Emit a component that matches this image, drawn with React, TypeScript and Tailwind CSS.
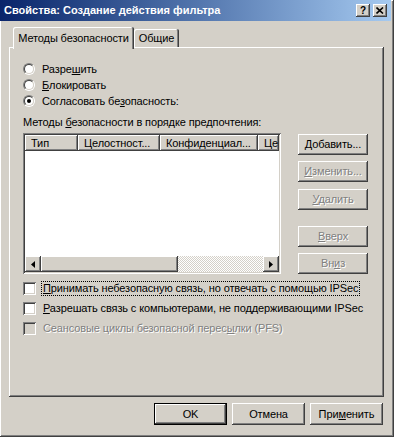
import React from "react";

const raised =
  "bg-[#d4d0c8] shadow-[inset_-1px_-1px_#404040,inset_1px_1px_#ffffff,inset_-2px_-2px_#808080,inset_2px_2px_#d4d0c8]";
const sunken =
  "shadow-[inset_1px_1px_#808080,inset_-1px_-1px_#ffffff,inset_2px_2px_#404040,inset_-2px_-2px_#d4d0c8]";
const disabledText = "text-[#808080] [text-shadow:1px_1px_0_#ffffff]";

function U({ children }: { children: React.ReactNode }) {
  return <span className="underline underline-offset-[1px] decoration-1">{children}</span>;
}

function Radio({ checked, children }: { checked?: boolean; children: React.ReactNode }) {
  return (
    <div className="flex items-center h-[16px]">
      <div className="w-[12px] h-[12px] rounded-full border border-t-[#808080] border-l-[#808080] border-b-white border-r-white">
        <div className="w-full h-full rounded-full border border-t-[#404040] border-l-[#404040] border-b-[#d4d0c8] border-r-[#d4d0c8] bg-white flex items-center justify-center">
          {checked && <div className="w-[4px] h-[4px] rounded-full bg-black" />}
        </div>
      </div>
      <span className="ml-[7px]">{children}</span>
    </div>
  );
}

function Check({ disabled, focus, children }: { disabled?: boolean; focus?: boolean; children: React.ReactNode }) {
  return (
    <div className="flex items-center h-[20px] whitespace-nowrap">
      <div className={`w-[13px] h-[13px] shrink-0 ${sunken} ${disabled ? "bg-[#d4d0c8]" : "bg-white"}`} />
      <span
        className={`ml-[5px] px-[1px] py-[1px] border ${focus ? "border-dotted border-black" : "border-transparent"} ${
          disabled ? disabledText : ""
        }`}
      >
        {children}
      </span>
    </div>
  );
}

function Btn({
  children,
  disabled,
  className = "",
}: {
  children: React.ReactNode;
  disabled?: boolean;
  className?: string;
}) {
  return (
    <div
      className={`${raised} h-[21px] flex items-center justify-center whitespace-nowrap ${disabled ? disabledText : ""} ${className}`}
    >
      {children}
    </div>
  );
}

function Arrow({ dir }: { dir: "left" | "right" }) {
  return (
    <div className={`${raised} w-[16px] h-[16px] flex items-center justify-center shrink-0`}>
      <svg width="4" height="7" viewBox="0 0 4 7">
        {dir === "left" ? <path d="M4 0 L0 3.5 L4 7 Z" fill="#000" /> : <path d="M0 0 L4 3.5 L0 7 Z" fill="#000" />}
      </svg>
    </div>
  );
}

function Col({ w, children }: { w: string; children?: React.ReactNode }) {
  return (
    <div className={`${raised} ${w} shrink-0 pl-[6px] flex items-center overflow-hidden whitespace-nowrap`}>{children}</div>
  );
}

export default function App() {
  return (
    <div
      className="w-[394px] h-[437px] bg-[#d4d0c8] text-[11px] text-black leading-none overflow-hidden flex flex-col shadow-[inset_-1px_-1px_#404040,inset_1px_1px_#ffffff,inset_-2px_-2px_#808080]"
      style={{ fontFamily: '"Liberation Sans", Arial, sans-serif' }}
    >
      {/* title bar */}
      <div className="mr-[3px] h-[21px] bg-gradient-to-r from-[#0a246a] to-[#a6caf0] flex items-center pl-[4px] pr-[4px]">
        <span className="text-white font-bold text-[11px] flex-1">Свойства: Создание действия фильтра</span>
        <div className={`${raised} w-[14px] h-[13px] flex items-center justify-center font-bold text-[10px]`}>?</div>
        <div className={`${raised} w-[14px] h-[13px] flex items-center justify-center ml-[3px]`}>
          <svg width="8" height="7" viewBox="0 0 8 7">
            <path d="M0.5 0.5 L7 6.5 M7 0.5 L0.5 6.5" stroke="#000" strokeWidth="1.6" />
          </svg>
        </div>
      </div>

      <div className="flex flex-col pl-[9px] pr-[10px] pt-[6px] tracking-[-0.12px]">
        {/* tabs */}
        <div className="flex items-end h-[20px] pl-[4px]">
          <div className="relative z-10 -mb-[2px] h-[22px] w-[121px] bg-[#d4d0c8] rounded-t-[2px] shadow-[inset_-1px_0_#404040,inset_1px_1px_#ffffff,inset_-2px_0_#808080] flex items-start justify-center pt-[6px]">
            Методы безопасности
          </div>
          <div className="h-[18px] w-[45px] bg-[#d4d0c8] rounded-t-[2px] shadow-[inset_-1px_0_#404040,inset_1px_1px_#ffffff,inset_-2px_0_#808080] flex items-start justify-center pt-[4px]">
            Общие
          </div>
        </div>

        {/* panel */}
        <div className={`${raised} h-[350px] flex flex-col pl-[14px] pr-[16px] pt-[14px]`}>
          <Radio>
            Разре<U>ш</U>ить
          </Radio>
          <Radio>
            <U>Б</U>локировать
          </Radio>
          <Radio checked>
            Согласовать бе<U>з</U>опасность:
          </Radio>

          <div className="mt-[8px] h-[13px]">
            Методы <U>б</U>езопасности в порядке предпочтения:
          </div>

          <div className="flex mt-[3px]">
            {/* list */}
            <div className={`${sunken} bg-white w-[258px] h-[141px] p-[2px] flex flex-col`}>
              <div className="flex h-[16px] overflow-hidden">
                <Col w="w-[53px]">Тип</Col>
                <Col w="w-[82px]">Целостност...</Col>
                <Col w="w-[98px]">Конфиденциал...</Col>
                <Col w="w-[21px]">Це</Col>
              </div>
              <div className="flex-1" />
              <div className="flex h-[16px]">
                <Arrow dir="left" />
                <div className={`${raised} w-[137px] shrink-0`} />
                <div className="flex-1 bg-[image:repeating-conic-gradient(#ffffff_0_25%,#d4d0c8_0_50%)] bg-[length:2px_2px]" />
                <Arrow dir="right" />
              </div>
            </div>

            {/* side buttons */}
            <div className="ml-[17px] w-[70px] flex flex-col pt-[1px]">
              <Btn>
                <span>
                  <U>Д</U>обавить...
                </span>
              </Btn>
              <Btn disabled className="mt-[6px]">
                <span>
                  <U>И</U>зменить...
                </span>
              </Btn>
              <Btn disabled className="mt-[7px]">
                <span>
                  <U>У</U>далить
                </span>
              </Btn>
              <Btn disabled className="mt-[16px]">
                <span>
                  <U>В</U>верх
                </span>
              </Btn>
              <Btn disabled className="mt-[6px]">
                <span>
                  Вн<U>и</U>з
                </span>
              </Btn>
            </div>
          </div>

          <div className="mt-[4px] flex flex-col">
            <Check focus>
              <U>П</U>ринимать небезопасную связь, но отвечать с помощью IPSec
            </Check>
            <Check>
              <U>Р</U>азрешать связь с компьютерами, не поддерживающими IPSec
            </Check>
            <Check disabled>
              Сеансовые циклы безопасной перес<U>ы</U>лки (PFS)
            </Check>
          </div>
        </div>

        {/* dialog buttons */}
        <div className="flex justify-end gap-[5px] mt-[6px] pr-[1px]">
          <div className="w-[73px] h-[22px] border border-black">
            <div className={`${raised} w-full h-full flex items-center justify-center`}>OK</div>
          </div>
          <Btn className="w-[73px] h-[22px]">Отмена</Btn>
          <Btn className="w-[73px] h-[22px]">
            <span>
              При<U>м</U>енить
            </span>
          </Btn>
        </div>
      </div>
    </div>
  );
}
